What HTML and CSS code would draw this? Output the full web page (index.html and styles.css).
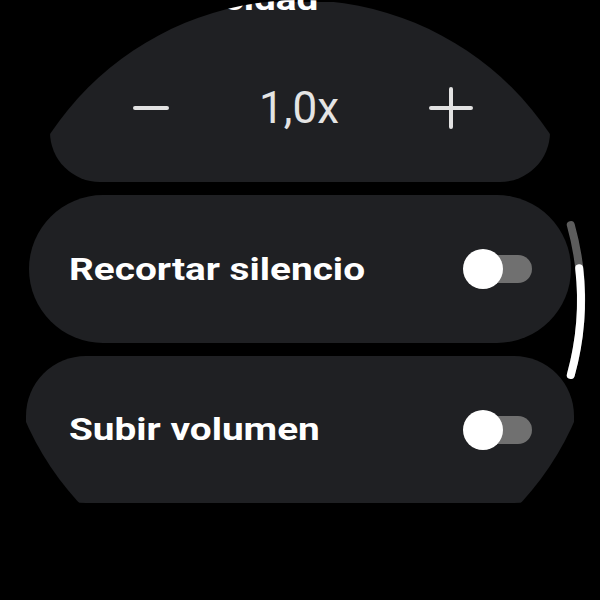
FILE: index.html
```html
<!DOCTYPE html>
<html lang="es">
<head>
    <meta charset="UTF-8">
    <meta name="viewport" content="width=device-width, initial-scale=1.0">
    <title>Velocidad</title>
    <link rel="stylesheet" href="styles.css">
</head>
<body>
    <div class="screen">
        <div class="list">
            <div class="listHeader"><span class="wide">Velocidad</span></div>

            <div class="card speedCard">
                <div class="stepper">
                    <button class="stepBtn" aria-label="Reducir">
                        <svg width="36" height="36" viewBox="0 0 36 36">
                            <path d="M2 18 H34" />
                        </svg>
                    </button>
                    <span class="speedValue">1,0x</span>
                    <button class="stepBtn" aria-label="Aumentar">
                        <svg width="44" height="44" viewBox="0 0 44 44">
                            <path d="M2 22 H42 M22 3 V41" />
                        </svg>
                    </button>
                </div>
            </div>

            <div class="card toggleCard middleCard">
                <span class="label wide">Recortar silencio</span>
                <span class="switch"><span class="thumb"></span></span>
            </div>

            <div class="card toggleCard bottomCard">
                <span class="label wide">Subir volumen</span>
                <span class="switch"><span class="thumb"></span></span>
            </div>
        </div>

        <!-- scroll position indicator, sits over the cards -->
        <svg class="scrollIndicator" width="600" height="600" viewBox="0 0 600 600">
            <path class="scrollTrack" d="M570.8 225 A281 281 0 0 1 570.8 375" />
            <path class="scrollThumb" d="M579.2 268.2 A281 281 0 0 1 570.8 375" />
        </svg>
    </div>
</body>
</html>
```

FILE: styles.css
```css
body {
    margin: 0;
    background-color: #000;
    font-family: Roboto, "Liberation Sans", sans-serif;
    color: #fff;
}

/* round watch face */
.screen {
    position: relative;
    width: 600px;
    height: 600px;
    overflow: hidden;
    clip-path: circle(300px at 300px 300px);
}

.list {
    display: flex;
    flex-direction: column;
    align-items: center;
    gap: 13px;
}

.listHeader {
    position: relative;
    z-index: 1;
    align-self: stretch;
    height: 36px;
    line-height: 36px;
    margin-top: -18px;
    margin-bottom: -29px;
    padding-left: 146px;
    font-size: 31px;
    font-weight: 700;
}

/* the watch font is a wide cut of Roboto */
.wide {
    display: inline-block;
    transform: scaleX(1.25);
    transform-origin: left center;
}

.card {
    box-sizing: border-box;
    background-color: #1f2023;
}

.speedCard {
    width: 500px;
    height: 180px;
    border-radius: 50px;
    padding-top: 32px;
    display: flex;
    align-items: center;
}

.stepper {
    flex: 1;
    display: flex;
    align-items: center;
    justify-content: space-between;
    padding: 0 77px 0 83px;
}

.stepBtn {
    background: none;
    border: 0;
    padding: 0;
    display: flex;
}

.stepBtn path {
    stroke: #e2e2e2;
    stroke-width: 4;
    stroke-linecap: round;
    fill: none;
}

.speedValue {
    font-size: 44px;
    color: #e4e4e4;
    line-height: 1;
}

.toggleCard {
    display: flex;
    align-items: center;
    justify-content: space-between;
}

.middleCard {
    width: 542px;
    height: 148px;
    border-radius: 74px;
    padding: 0 39px 0 40px;
}

.bottomCard {
    width: 548px;
    height: 147px;
    border-radius: 60px;
    padding: 0 42px 0 43px;
}

.label {
    font-size: 31px;
    font-weight: 700;
}

.switch {
    position: relative;
    width: 66px;
    height: 28px;
    border-radius: 14px;
    background-color: #707070;
}

.thumb {
    position: absolute;
    left: -3px;
    top: -6px;
    width: 40px;
    height: 40px;
    border-radius: 50%;
    background-color: #fff;
}

.scrollIndicator {
    position: absolute;
    top: 0;
    left: 0;
    pointer-events: none;
}

.scrollIndicator path {
    fill: none;
    stroke-width: 8;
    stroke-linecap: round;
}

.scrollTrack {
    stroke: #5c5c5c;
}

.scrollThumb {
    stroke: #fff;
}
```
